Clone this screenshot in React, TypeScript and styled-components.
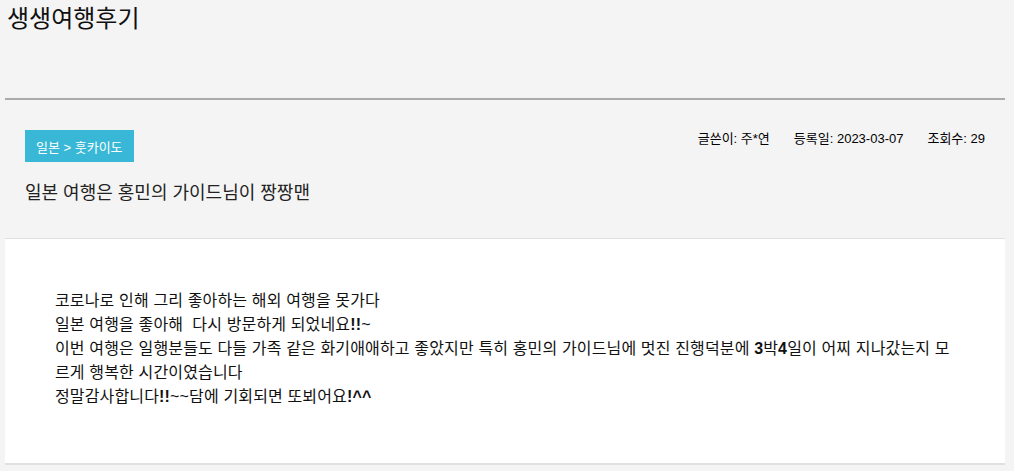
import React from "react";
import styled, { createGlobalStyle } from "styled-components";

const GlobalStyle = createGlobalStyle`
  html, body {
    margin: 0;
    padding: 0;
    background: #f4f4f4;
  }
  body {
    font-family: "Liberation Sans", "Noto Sans CJK KR", sans-serif;
    color: #222;
  }
`;

const Page = styled.div`
  padding: 0 9px 0 5px;
`;

const Header = styled.header`
  height: 98px;
`;

const BoardTitle = styled.h2`
  margin: 0;
  padding: 2px 0 0 2px;
  font-size: 24px;
  line-height: 34px;
  font-weight: 400;
  color: #111;
`;

const Divider = styled.hr`
  margin: 0;
  border: 0;
  height: 2px;
  background: #aaa;
`;

const Info = styled.section`
  padding: 30px 20px 33px;
`;

const InfoRow = styled.div`
  display: flex;
  justify-content: space-between;
  align-items: flex-start;
`;

const Category = styled.span`
  display: inline-flex;
  align-items: center;
  height: 32px;
  padding: 0 11px;
  background: #38b8d6;
  color: #fff;
  font-size: 13px;
`;

const Meta = styled.ul`
  display: flex;
  gap: 24px;
  margin: 0;
  padding: 0;
  list-style: none;
  font-size: 13px;
  line-height: 18px;
  color: #000;
`;

const Subject = styled.h3`
  margin: 19px 0 0;
  font-size: 18px;
  line-height: 24px;
  font-weight: 400;
  color: #222;
`;

const Body = styled.article`
  background: #fff;
  border-top: 1px solid #e0e0e0;
  border-bottom: 2px solid #e0e0e0;
  padding: 50px 50px 54px;
  font-size: 16px;
  line-height: 24px;
  letter-spacing: 0.15px;
  color: #111;
  word-break: break-all;
`;

const Line = styled.p`
  margin: 0;
`;

const Bold = styled.b`
  font-weight: 700;
`;

export default function App() {
  return (
    <Page>
      <GlobalStyle />
      <Header>
        <BoardTitle>생생여행후기</BoardTitle>
      </Header>
      <Divider />
      <Info>
        <InfoRow>
          <Category>일본 &gt; 훗카이도</Category>
          <Meta>
            <li>글쓴이: 주*연</li>
            <li>등록일: 2023-03-07</li>
            <li>조회수: 29</li>
          </Meta>
        </InfoRow>
        <Subject>일본 여행은 홍민의 가이드님이 짱짱맨</Subject>
      </Info>
      <Body>
        <Line>코로나로 인해 그리 좋아하는 해외 여행을 못가다</Line>
        <Line>
          일본 여행을 좋아해&nbsp; 다시 방문하게 되었네요<Bold>!!</Bold>~
        </Line>
        <Line>
          이번 여행은 일행분들도 다들 가족 같은 화기애애하고 좋았지만 특히 홍민의 가이드님에 멋진 진행덕분에 <Bold>3</Bold>박<Bold>4</Bold>일이 어찌 지나갔는지 모르게 행복한 시간이였습니다
        </Line>
        <Line>
          정말감사합니다<Bold>!!</Bold>~~담에 기회되면 또뵈어요<Bold>!^^</Bold>
        </Line>
      </Body>
    </Page>
  );
}
